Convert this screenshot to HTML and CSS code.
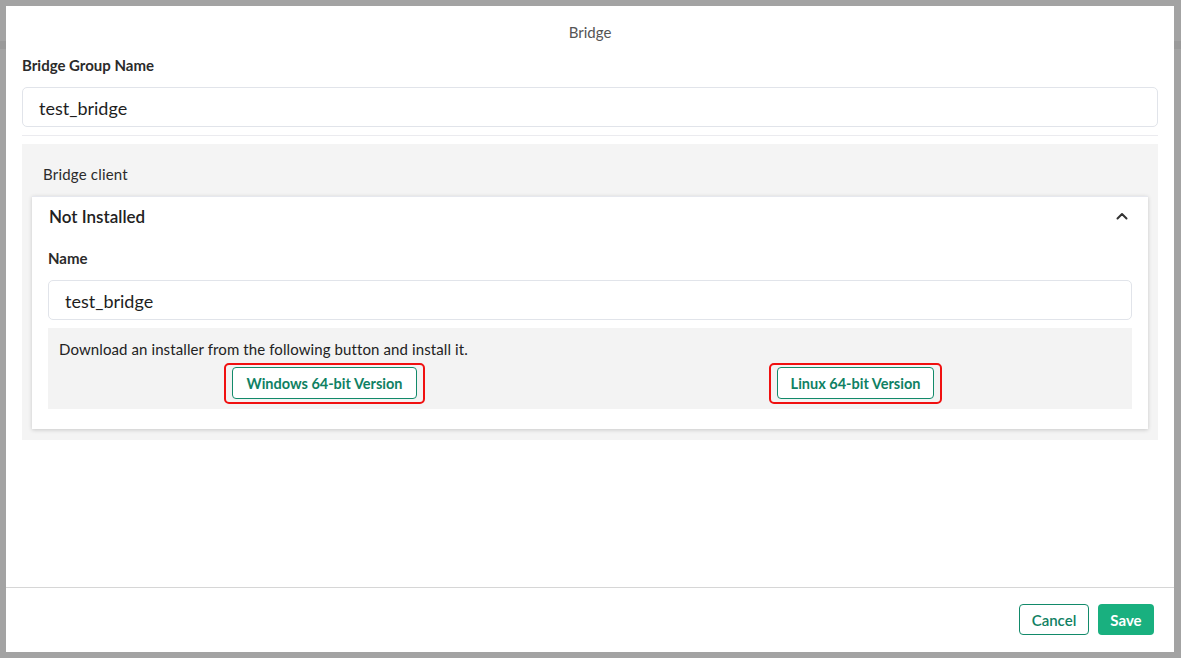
FILE: index.html
```html
<!DOCTYPE html>
<html lang="en">
<head>
  <meta charset="UTF-8">
  <meta name="viewport" content="width=device-width, initial-scale=1.0">
  <title>Bridge</title>
  <link rel="stylesheet" href="styles.css">
</head>
<body>
  <div class="modal">
    <div class="modal-title">Bridge</div>

    <div class="modal-body">
      <label class="field-label">Bridge Group Name</label>
      <div class="text-input">test_bridge</div>
      <div class="divider"></div>

      <div class="client-panel">
        <div class="panel-title">Bridge client</div>

        <div class="client-card">
          <div class="card-header">
            <span class="card-title">Not Installed</span>
            <svg class="chevron" width="14" height="10" viewBox="0 0 14 10">
              <path d="M2.5 7.5 L7 3 L11.5 7.5" fill="none" stroke="#333" stroke-width="2" stroke-linecap="round" stroke-linejoin="round"/>
            </svg>
          </div>

          <label class="field-label inner">Name</label>
          <div class="text-input">test_bridge</div>

          <div class="download-box">
            <p class="download-text">Download an installer from the following button and install it.</p>
            <div class="download-row">
              <div class="download-col">
                <span class="highlight"><button class="btn-outline">Windows 64-bit Version</button></span>
              </div>
              <div class="download-col">
                <span class="highlight"><button class="btn-outline">Linux 64-bit Version</button></span>
              </div>
            </div>
          </div>
        </div>
      </div>
    </div>

    <div class="modal-footer">
      <button class="btn-outline btn-cancel">Cancel</button>
      <button class="btn-primary">Save</button>
    </div>
  </div>
</body>
</html>
```

FILE: styles.css
```css
body {
  margin: 0;
  padding: 6px 7px 6px 6px;
  height: 658px;
  box-sizing: border-box;
  background-color: #a3a3a3;
  background-image: linear-gradient(to bottom, transparent 41px, #9a9a9a 41px, #9a9a9a 49px, transparent 49px);
  font-family: "Lato", "Liberation Sans", sans-serif;
  color: #222;
}
.modal {
  background: #fff;
  height: 646px;
  display: flex;
  flex-direction: column;
}
.modal-title {
  padding-top: 16px;
  line-height: 20px;
  font-size: 15px;
  text-align: center;
  color: #555;
}
.modal-body {
  padding: 0 16px;
}
.field-label {
  display: block;
  margin-top: 13px;
  margin-bottom: 12px;
  line-height: 20px;
  font-size: 15px;
  font-weight: bold;
  color: #2b2b2b;
}
.field-label.inner {
  margin-top: 19px;
}
.text-input {
  height: 40px;
  box-sizing: border-box;
  border: 1px solid #e1e4ea;
  border-radius: 5px;
  padding: 1px 16px 0;
  line-height: 38px;
  font-size: 18px;
  color: #1e1e1e;
}
.divider {
  margin-top: 8px;
  height: 1px;
  background: #ebebef;
}
.client-panel {
  margin-top: 8px;
  background: #f4f4f4;
  padding: 20px 10px 11px;
}
.panel-title {
  line-height: 20px;
  font-size: 15px;
  letter-spacing: 0.2px;
  padding-left: 11px;
  margin-bottom: 12px;
  color: #2b2b2b;
}
.client-card {
  background: #fff;
  border-top: 1px solid #e6e8ee;
  box-shadow: 0 1px 4px rgba(0, 0, 0, 0.18);
  padding: 8px 16px 20px;
}
.card-header {
  display: flex;
  justify-content: space-between;
  align-items: center;
  line-height: 24px;
}
.card-title {
  font-size: 17px;
  font-weight: 600;
  padding-left: 1px;
}
.chevron {
  margin-right: 3px;
  margin-bottom: 2px;
}
.download-box {
  margin-top: 8px;
  background: #f3f3f3;
  padding: 11px 11px 5px;
}
.download-text {
  margin: 0;
  line-height: 20px;
  font-size: 15px;
  letter-spacing: 0.1px;
  color: #222;
}
.download-row {
  display: grid;
  grid-template-columns: 1fr 1fr;
  margin-top: 4px;
}
.download-col {
  text-align: center;
}
.highlight {
  display: inline-block;
  border: 2px solid #f01010;
  border-radius: 5px;
  padding: 2px 6px 3px;
}
button {
  font-family: inherit;
  cursor: pointer;
}
.btn-outline {
  display: block;
  height: 32px;
  padding: 0 13px;
  background: #fff;
  border: 1px solid #128a6a;
  border-radius: 4px;
  color: #0f8163;
  font-size: 14.5px;
  font-weight: bold;
}
.modal-footer {
  margin-top: auto;
  border-top: 1px solid #d6d6d6;
  padding: 16px 20px 17px;
  display: flex;
  justify-content: flex-end;
  gap: 9px;
}
.btn-cancel {
  width: 70px;
  height: 31px;
  padding: 0;
  font-size: 15px;
  font-weight: 600;
}
.btn-primary {
  width: 56px;
  height: 31px;
  border: none;
  border-radius: 4px;
  background: #19b07f;
  color: #fff;
  font-size: 15px;
  font-weight: bold;
}
```
